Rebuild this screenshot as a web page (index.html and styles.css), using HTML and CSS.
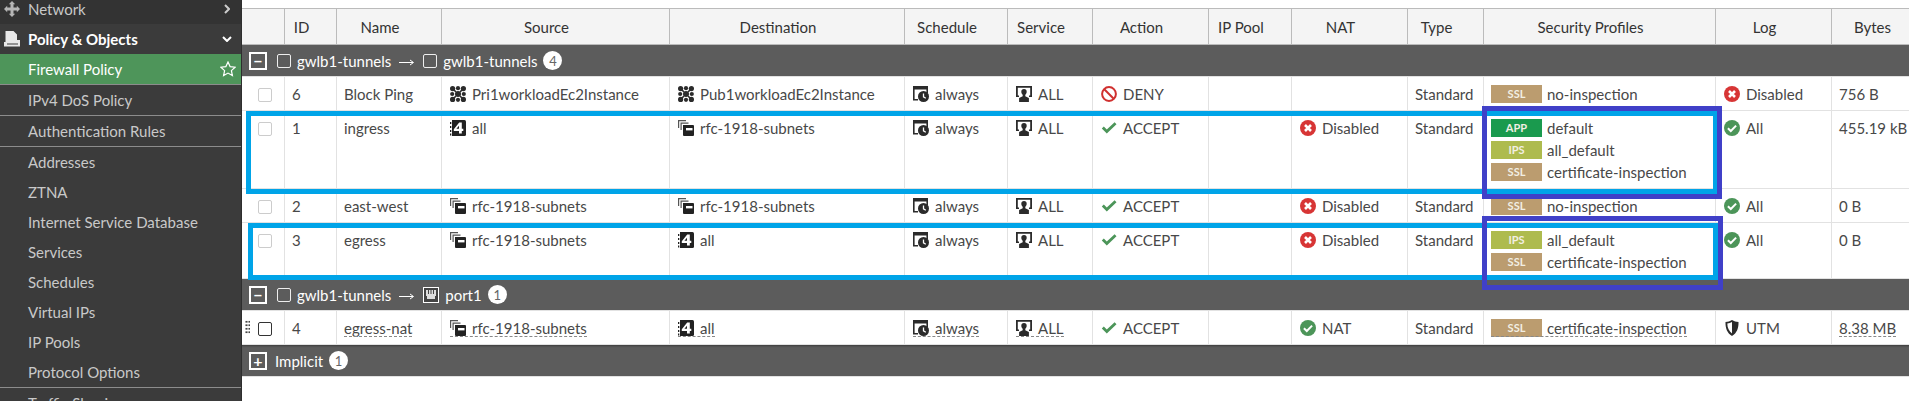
FILE: index.html
```html
<!DOCTYPE html>
<html lang="en">
<head>
<meta charset="utf-8">
<title>Firewall Policy</title>
<link rel="stylesheet" href="styles.css">
</head>
<body>
<svg class="defs" xmlns="http://www.w3.org/2000/svg">
  <symbol id="i-geo" viewBox="0 0 16 16"><g fill="#2b2b2b"><circle cx="2.600" cy="2.600" r="2.600"/><circle cx="8" cy="2.200" r="2.100"/><circle cx="13.400" cy="2.600" r="2.600"/><circle cx="2.200" cy="8" r="2.100"/><circle cx="8" cy="8" r="3"/><circle cx="13.800" cy="8" r="2.100"/><circle cx="2.600" cy="13.400" r="2.600"/><circle cx="8" cy="13.800" r="2.100"/><circle cx="13.400" cy="13.400" r="2.600"/><path d="M3 3l3 3M13 3l-3 3M3 13l3-3M13 13l-3-3" stroke="#2b2b2b" stroke-width="1.600"/></g></symbol>
  <symbol id="i-grp" viewBox="0 0 16 16"><path d="M0 0h8v1.200H1.200V8H0zM2.500 2.500h8v1.200H3.700V10H2.500z" fill="#555"/><path d="M5 5h10a1 1 0 0 1 1 1V15a1 1 0 0 1-1 1H6a1 1 0 0 1-1-1z" fill="#222"/><rect x="8" y="8" width="6.500" height="2.400" fill="#fff"/></symbol>
  <symbol id="i-all" viewBox="0 0 16 16"><path d="M2 0h12.500A1.500 1.500 0 0 1 16 1.500v13a1.500 1.500 0 0 1-1.500 1.500H2z" fill="#222"/><path d="M0 2h1.300v2H0zM0 6h1.300v2H0zM0 10h1.300v2H0zM0 13.500h1.300v2H0z" fill="#222"/><path d="M9.200 2.500h2.600v6.300h1.500v2.200h-1.500v2.500H9v-2.500H3.800V9.200zM9 8.800V5.800L6.400 8.800z" fill="#fff" fill-rule="evenodd"/></symbol>
  <symbol id="i-sch" viewBox="0 0 16 16"><path d="M0 2.500V0h15v7h-1.600V3.500H1.600v9.400H5V14.500H0z" fill="#2b2b2b"/><circle cx="10.500" cy="10.500" r="5.500" fill="#2b2b2b"/><path d="M10.500 7.500v3.300l2.300 1.400" fill="none" stroke="#fff" stroke-width="1.300"/></symbol>
  <symbol id="i-svc" viewBox="0 0 16 16"><path d="M0 0h16v11h-3V9.500H14.200V1.700H1.800V9.500H3V11H0z" fill="#2b2b2b"/><path d="M8 3a2.700 2.700 0 0 1 2.700 2.700c0 1.300-.7 2.400-1.400 3v1.600l3.600 1.600V16H3.100v-4.100l3.600-1.600V8.700C6 8.100 5.300 7 5.300 5.700A2.700 2.700 0 0 1 8 3z" fill="#2b2b2b"/></symbol>
  <symbol id="i-deny" viewBox="0 0 16 16"><circle cx="8" cy="8" r="6.900" fill="none" stroke="#d0302f" stroke-width="2"/><path d="M3.300 3.300l9.400 9.400" stroke="#d0302f" stroke-width="2"/></symbol>
  <symbol id="i-ok" viewBox="0 0 16 16"><path d="M.8 8.400l2-2 3 3L13.600 2.200l1.900 2L5.800 13.600z" fill="#4c9559"/></symbol>
  <symbol id="i-x" viewBox="0 0 16 16"><circle cx="8" cy="8" r="8" fill="#d73535"/><path d="M5 5l6 6M11 5l-6 6" stroke="#fff" stroke-width="2.600"/></symbol>
  <symbol id="i-yes" viewBox="0 0 16 16"><circle cx="8" cy="8" r="8" fill="#4c9559"/><path d="M3.900 8.200l2.900 2.800 5.300-5.400" fill="none" stroke="#fff" stroke-width="2"/></symbol>
  <symbol id="i-utm" viewBox="0 0 16 16"><path d="M8 0c2 1.300 4 1.900 6.500 2 .2 6-1.500 11-6.500 14C3 13 1.300 8 1.500 2 4 1.900 6 1.300 8 0z" fill="#2b2b2b"/><path d="M8 2v11.500C5 11.200 3.400 8 3.300 3.500 5 3.400 6.500 2.900 8 2z" fill="#fff"/></symbol>
  <symbol id="i-move" viewBox="0 0 16 16"><path d="M8 0l3.200 3.200H9.500v3.300h3.300V4.800L16 8l-3.200 3.200V9.500H9.500v3.300h1.700L8 16l-3.200-3.200h1.700V9.500H3.200v1.700L0 8l3.200-3.200v1.700h3.300V3.200H4.800z" fill="#b5b5b5"/></symbol>
  <symbol id="i-pol" viewBox="0 0 16 16"><path d="M1.500 0h8l3.500 3.500V9h3v6.500H0V11h1.500z" fill="#e8e8e8"/><path d="M3 13h11" stroke="#3a3a3a" stroke-width="1"/></symbol>
  <symbol id="i-star" viewBox="0 0 16 16"><path d="M8 1l2.100 4.600 5 .6-3.700 3.400 1 5L8 12.100 3.600 14.600l1-5L.9 6.200l5-.6z" fill="none" stroke="#fff" stroke-width="1.200"/></symbol>
  <symbol id="i-port" viewBox="0 0 16 16"><rect x=".5" y=".5" width="15" height="15" fill="#444" stroke="#fff"/><path d="M3 3h10v6h-1v3H4V9H3z" fill="#ddd"/><path d="M5.500 3v4M8 3v4M10.500 3v4" stroke="#444"/></symbol>
  <symbol id="i-arrow" viewBox="0 0 15 8"><path d="M0 4.500h14M11 2l3.500 2.500L11 7" fill="none" stroke="#fff" stroke-width="1"/></symbol>
</svg>

<div class="app">
  <nav class="side">
    <div class="nav cut"><svg class="nico"><use href="#i-move"/></svg><span>Network</span><svg class="right" viewBox="0 0 6 10"><path d="M1 1l4 4-4 4" fill="none" stroke="#ccc" stroke-width="2"/></svg></div>
    <div class="nav head"><svg class="nico"><use href="#i-pol"/></svg><span>Policy &amp; Objects</span><svg class="down" viewBox="0 0 10 6"><path d="M1 1l4 4 4-4" fill="none" stroke="#fff" stroke-width="2"/></svg></div>
    <div class="nav on sep"><span>Firewall Policy</span><svg class="star"><use href="#i-star"/></svg></div>
    <div class="nav sep"><span>IPv4 DoS Policy</span></div>
    <div class="nav sep"><span>Authentication Rules</span></div>
    <div class="nav"><span>Addresses</span></div>
    <div class="nav"><span>ZTNA</span></div>
    <div class="nav"><span>Internet Service Database</span></div>
    <div class="nav"><span>Services</span></div>
    <div class="nav"><span>Schedules</span></div>
    <div class="nav"><span>Virtual IPs</span></div>
    <div class="nav"><span>IP Pools</span></div>
    <div class="nav sep"><span>Protocol Options</span></div>
    <div class="nav"><span>Traffic Shaping</span></div>
  </nav>

  <main class="main">
    <table class="grid">
      <colgroup>
        <col class="c-chk"><col class="c-id"><col class="c-name"><col class="c-src"><col class="c-dst"><col class="c-sch"><col class="c-svc"><col class="c-act"><col class="c-ip"><col class="c-nat"><col class="c-type"><col class="c-sec"><col class="c-log"><col class="c-bytes">
      </colgroup>
      <thead>
        <tr><th></th><th>ID</th><th>Name</th><th>Source</th><th>Destination</th><th>Schedule</th><th>Service</th><th>Action</th><th>IP Pool</th><th>NAT</th><th>Type</th><th>Security Profiles</th><th>Log</th><th>Bytes</th></tr>
      </thead>
      <tbody>
        <tr class="grp"><td colspan="14"><div class="gline"><span class="exp">&#8722;</span><span class="gchk"></span><span>gwlb1-tunnels</span><svg class="arrow"><use href="#i-arrow"/></svg><span class="gchk"></span><span>gwlb1-tunnels</span><span class="count">4</span></div></td></tr>
        <tr class="r34">
          <td><span class="chk"></span></td><td>6</td><td>Block Ping</td>
          <td><span class="it"><svg class="ico"><use href="#i-geo"/></svg>Pri1workloadEc2Instance</span></td>
          <td><span class="it"><svg class="ico"><use href="#i-geo"/></svg>Pub1workloadEc2Instance</span></td>
          <td><span class="it"><svg class="ico"><use href="#i-sch"/></svg>always</span></td>
          <td><span class="it"><svg class="ico"><use href="#i-svc"/></svg>ALL</span></td>
          <td><span class="it"><svg class="ico"><use href="#i-deny"/></svg>DENY</span></td>
          <td></td><td></td><td>Standard</td>
          <td><span class="pf"><b class="tag ssl">SSL</b>no-inspection</span></td>
          <td><span class="it"><svg class="ico"><use href="#i-x"/></svg>Disabled</span></td>
          <td>756 B</td>
        </tr>
        <tr class="r78">
          <td><span class="chk"></span></td><td>1</td><td>ingress</td>
          <td><span class="it"><svg class="ico"><use href="#i-all"/></svg>all</span></td>
          <td><span class="it"><svg class="ico"><use href="#i-grp"/></svg>rfc-1918-subnets</span></td>
          <td><span class="it"><svg class="ico"><use href="#i-sch"/></svg>always</span></td>
          <td><span class="it"><svg class="ico"><use href="#i-svc"/></svg>ALL</span></td>
          <td><span class="it"><svg class="ico"><use href="#i-ok"/></svg>ACCEPT</span></td>
          <td></td>
          <td><span class="it"><svg class="ico"><use href="#i-x"/></svg>Disabled</span></td>
          <td>Standard</td>
          <td><span class="pf"><b class="tag app">APP</b>default</span><span class="pf"><b class="tag ips">IPS</b>all_default</span><span class="pf"><b class="tag ssl">SSL</b>certificate-inspection</span></td>
          <td><span class="it"><svg class="ico"><use href="#i-yes"/></svg>All</span></td>
          <td>455.19 kB</td>
        </tr>
        <tr class="r34">
          <td><span class="chk"></span></td><td>2</td><td>east-west</td>
          <td><span class="it"><svg class="ico"><use href="#i-grp"/></svg>rfc-1918-subnets</span></td>
          <td><span class="it"><svg class="ico"><use href="#i-grp"/></svg>rfc-1918-subnets</span></td>
          <td><span class="it"><svg class="ico"><use href="#i-sch"/></svg>always</span></td>
          <td><span class="it"><svg class="ico"><use href="#i-svc"/></svg>ALL</span></td>
          <td><span class="it"><svg class="ico"><use href="#i-ok"/></svg>ACCEPT</span></td>
          <td></td>
          <td><span class="it"><svg class="ico"><use href="#i-x"/></svg>Disabled</span></td>
          <td>Standard</td>
          <td><span class="pf"><b class="tag ssl">SSL</b>no-inspection</span></td>
          <td><span class="it"><svg class="ico"><use href="#i-yes"/></svg>All</span></td>
          <td>0 B</td>
        </tr>
        <tr class="r56">
          <td><span class="chk"></span></td><td>3</td><td>egress</td>
          <td><span class="it"><svg class="ico"><use href="#i-grp"/></svg>rfc-1918-subnets</span></td>
          <td><span class="it"><svg class="ico"><use href="#i-all"/></svg>all</span></td>
          <td><span class="it"><svg class="ico"><use href="#i-sch"/></svg>always</span></td>
          <td><span class="it"><svg class="ico"><use href="#i-svc"/></svg>ALL</span></td>
          <td><span class="it"><svg class="ico"><use href="#i-ok"/></svg>ACCEPT</span></td>
          <td></td>
          <td><span class="it"><svg class="ico"><use href="#i-x"/></svg>Disabled</span></td>
          <td>Standard</td>
          <td><span class="pf"><b class="tag ips">IPS</b>all_default</span><span class="pf"><b class="tag ssl">SSL</b>certificate-inspection</span></td>
          <td><span class="it"><svg class="ico"><use href="#i-yes"/></svg>All</span></td>
          <td>0 B</td>
        </tr>
        <tr class="grp"><td colspan="14"><div class="gline"><span class="exp">&#8722;</span><span class="gchk"></span><span>gwlb1-tunnels</span><svg class="arrow"><use href="#i-arrow"/></svg><svg class="ico gport"><use href="#i-port"/></svg><span>port1</span><span class="count">1</span></div></td></tr>
        <tr class="r34 hot">
          <td><span class="grip"></span><span class="chk dark"></span></td><td>4</td><td><span class="dash">egress-nat</span></td>
          <td><span class="it dash"><svg class="ico"><use href="#i-grp"/></svg>rfc-1918-subnets</span></td>
          <td><span class="it dash"><svg class="ico"><use href="#i-all"/></svg>all</span></td>
          <td><span class="it dash"><svg class="ico"><use href="#i-sch"/></svg>always</span></td>
          <td><span class="it dash"><svg class="ico"><use href="#i-svc"/></svg>ALL</span></td>
          <td><span class="it"><svg class="ico"><use href="#i-ok"/></svg>ACCEPT</span></td>
          <td></td>
          <td><span class="it"><svg class="ico"><use href="#i-yes"/></svg>NAT</span></td>
          <td>Standard</td>
          <td><span class="pf dash"><b class="tag ssl">SSL</b>certificate-inspection</span></td>
          <td><span class="it"><svg class="ico"><use href="#i-utm"/></svg>UTM</span></td>
          <td><span class="dash">8.38 MB</span></td>
        </tr>
        <tr class="grp last"><td colspan="14"><div class="gline"><span class="exp">+</span><span class="gname">Implicit</span><span class="count">1</span></div></td></tr>
      </tbody>
    </table>

    <div class="mark blue b1"></div>
    <div class="mark blue b2"></div>
    <div class="mark purple p1"></div>
    <div class="mark purple p2"></div>
  </main>
</div>
</body>
</html>
```

FILE: styles.css
```css
* { box-sizing: border-box; }
html, body { margin: 0; padding: 0; height: 401px; overflow: hidden; background: #fff; }
body { font-family: Lato, "Open Sans", sans-serif; font-size: 14px; color: #484848; }
.defs { display: none; }
.app { display: flex; height: 401px; overflow: hidden; }

/* sidebar */
.side { flex: 0 0 242px; width: 242px; height: 401px; overflow: hidden; background: #3b3b3b; border-right: 1px solid #2e2e2e; color: #c9c9c9; font-size: 15px; }
.nav { display: flex; align-items: center; height: 30px; padding-left: 28px; }
.nav span:first-of-type { flex: 1; }
.nav.sep { height: 31px; padding-bottom: 1px; border-bottom: 1px solid #8c8c8c; }
.nav.cut { height: 24px; padding-bottom: 6px; background: #333; padding-left: 4px; }
.nav.head { padding-left: 4px; color: #fff; font-weight: 700; }
.nav.on { height: 31px; background: #4e955a; color: #fff; }
.nico { width: 16px; height: 16px; margin-right: 8px; flex: none; }
.right { width: 6px; height: 10px; margin-right: 11px; }
.down { width: 10px; height: 6px; margin-right: 9px; }
.star { width: 16px; height: 16px; margin-right: 5px; }

/* table */
.main { flex: 1; position: relative; overflow: hidden; height: 401px; padding-top: 8px; background: #fff; }
.grid { table-layout: fixed; border-collapse: separate; border-spacing: 0; width: 1690px; }
.c-chk { width: 43px; } .c-id { width: 52px; } .c-name { width: 105px; } .c-src { width: 228px; }
.c-dst { width: 235px; } .c-sch { width: 103px; } .c-svc { width: 85px; } .c-act { width: 116px; }
.c-ip { width: 83px; } .c-nat { width: 116px; } .c-type { width: 76px; } .c-sec { width: 232px; }
.c-log { width: 116px; } .c-bytes { width: 100px; }

th { height: 37px; background: #f4f4f4; border-top: 1px solid #bbb; border-bottom: 1px solid #bbb; border-right: 1px solid #bbb; font-weight: 400; font-size: 15px; color: #333; padding: 0 18px 0 0; text-align: center; white-space: nowrap; }
td { vertical-align: top; padding: 7px 0 0 7px; line-height: 20px; border-right: 1px solid #e2e2e2; border-bottom: 1px solid #e2e2e2; white-space: nowrap; overflow: hidden; font-size: 15px; }
.r34 td { height: 34px; }
.r78 td { height: 78px; }
.r56 td { height: 56px; }
.hot td { position: relative; }

.grp td { height: 32px; padding: 0; background: #5c5c5c; color: #fff; border-right: 0; border-bottom: 1px solid #e2e2e2; font-size: 15px; }
.grp.last td { box-shadow: inset 0 2px 2px -1px #3c3c3c; }
.gline { display: flex; align-items: center; height: 31px; padding-left: 7px; }
.exp { display: flex; align-items: center; justify-content: center; width: 18px; height: 18px; border: 2px solid #fff; font-weight: 700; font-size: 16px; line-height: 1; margin-right: 10px; }
.gchk { width: 14px; height: 14px; border: 1.5px solid #eee; border-radius: 2px; margin-right: 6px; }
.arrow { width: 15px; height: 8px; margin: 2px 9px 0 8px; flex: none; }
.gport { margin-right: 5px; }
.gname { margin-left: -2px; }
.count { display: flex; align-items: center; justify-content: center; width: 19px; height: 19px; margin-left: 6px; border-radius: 50%; background: #fff; color: #666; font-size: 13px; }

.chk { display: block; width: 14px; height: 14px; margin: 4px 0 0 9px; border: 1.5px solid #ccc; border-radius: 2px; background: #fff; }
.chk.dark { border-color: #333; }
.grip { position: absolute; left: 3px; top: 9px; width: 5px; height: 14px; background-image: radial-gradient(circle, #444 1px, transparent 1.2px); background-size: 3px 3.500px; }

.it { display: inline-flex; align-items: center; height: 20px; margin-left: 1px; }
.ico { width: 16px; height: 16px; margin-right: 6px; flex: none; }
.pf { display: flex; align-items: center; height: 22px; position: relative; top: -1px; }
.tag { display: flex; align-items: center; justify-content: center; width: 51px; height: 18px; margin-right: 5px; font-size: 11px; font-weight: 700; color: #f2efe4; }
.ssl { background: #bb9c6f; }
.tag.app { background: #1a9a4e; }
.ips { background: #aebb4e; }

/* dashed underline of the row that has hit-count detail */
.dash { position: relative; display: inline-block; height: 20px; }
.it.dash { display: inline-flex; }
.pf.dash { display: flex; height: 22px; width: 196px; }
.dash::after { content: ""; position: absolute; left: 0; right: 0; top: 18px; border-top: 1px dashed #888; }
.pf.dash::after { top: 19px; }

/* annotation rectangles drawn over the table */
.mark { position: absolute; pointer-events: none; }
.blue { border: 5px solid #00a4e8; }
.purple { border: 5px solid #4040c8; }
.b1 { left: 4px; top: 111px; width: 1472px; height: 83px; }
.b2 { left: 6px; top: 223px; width: 1470px; height: 57px; }
.p1 { left: 1240px; top: 106px; width: 240px; height: 93px; }
.p2 { left: 1240px; top: 216px; width: 241px; height: 74px; }
```
